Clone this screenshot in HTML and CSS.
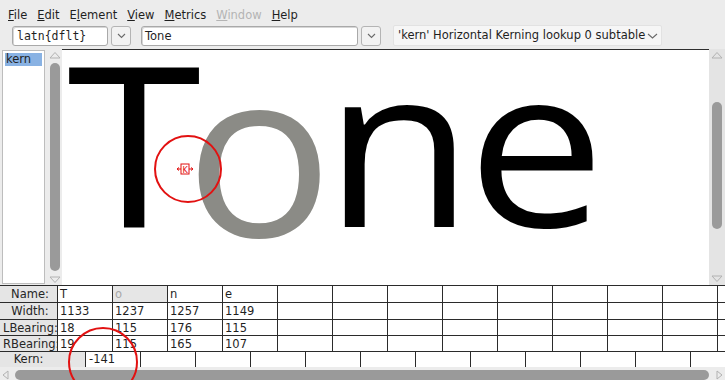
FILE: index.html
```html
<!DOCTYPE html>
<html>
<head>
<meta charset="utf-8">
<title>Metrics</title>
<link rel="stylesheet" href="styles.css">
</head>
<body>
<div class="window">
  <div class="menubar">
    <span class="menu"><u>F</u>ile</span>
    <span class="menu"><u>E</u>dit</span>
    <span class="menu">E<u>l</u>ement</span>
    <span class="menu"><u>V</u>iew</span>
    <span class="menu"><u>M</u>etrics</span>
    <span class="menu disabled"><u>W</u>indow</span>
    <span class="menu"><u>H</u>elp</span>
  </div>

  <div class="toolbar">
    <div class="field script">latn{dflt}</div>
    <div class="dropbtn"><svg width="9" height="6" viewBox="0 0 9 6"><path d="M1 1 L4.5 4.5 L8 1" fill="none" stroke="#6a6a6a" stroke-width="1.1"/></svg></div>
    <div class="field text">Tone</div>
    <div class="dropbtn"><svg width="9" height="6" viewBox="0 0 9 6"><path d="M1 1 L4.5 4.5 L8 1" fill="none" stroke="#6a6a6a" stroke-width="1.1"/></svg></div>
    <div class="combo"><span>'kern' Horizontal Kerning lookup 0 subtable</span><svg width="11" height="6" viewBox="0 0 11 6"><path d="M1 1 L5.5 5 L10 1" fill="none" stroke="#6a6a6a" stroke-width="1.1"/></svg></div>
  </div>

  <div class="main">
    <div class="featlist"><div class="feat selected">kern</div></div>
    <div class="vscroll vleft">
      <svg class="arrow" width="12" height="8" viewBox="0 0 12 8"><path d="M1 7 L6 1.5 L11 7 Z" fill="none" stroke="#b2b2b2" stroke-width="1"/></svg>
      <div class="thumb thumb-left"></div>
      <svg class="arrow" width="12" height="8" viewBox="0 0 12 8"><path d="M1 1 L6 6.5 L11 1 Z" fill="none" stroke="#b2b2b2" stroke-width="1"/></svg>
    </div>
    <div class="canvas">
      <svg class="glyphs" width="647" height="235" viewBox="0 0 647 235">
        <text transform="translate(5 177) scale(1.09 1)" class="g">T</text>
        <text transform="translate(123 187) scale(1.1 1.04)" class="g go">o</text>
        <text transform="translate(262 177) scale(1.09 1)" class="g">n</text>
        <text transform="translate(405 177) scale(1.1 1)" class="g">e</text>
      </svg>
    </div>
    <div class="vscroll vright">
      <svg class="arrow" width="12" height="8" viewBox="0 0 12 8"><path d="M1 7 L6 1.5 L11 7 Z" fill="none" stroke="#b2b2b2" stroke-width="1"/></svg>
      <div class="thumb thumb-right"></div>
      <div class="spacer"></div>
      <svg class="arrow" width="12" height="8" viewBox="0 0 12 8"><path d="M1 1 L6 6.5 L11 1 Z" fill="none" stroke="#b2b2b2" stroke-width="1"/></svg>
    </div>
  </div>

  <div class="table">
    <div class="lab">Name:</div><div class="c">T</div><div class="c cur">o</div><div class="c">n</div><div class="c">e</div><div class="c"></div><div class="c"></div><div class="c"></div><div class="c"></div><div class="c"></div><div class="c"></div><div class="c"></div><div class="c"></div><div class="c"></div>
    <div class="lab">Width:</div><div class="c">1133</div><div class="c">1237</div><div class="c">1257</div><div class="c">1149</div><div class="c"></div><div class="c"></div><div class="c"></div><div class="c"></div><div class="c"></div><div class="c"></div><div class="c"></div><div class="c"></div><div class="c"></div>
    <div class="lab">LBearing:</div><div class="c">18</div><div class="c">115</div><div class="c">176</div><div class="c">115</div><div class="c"></div><div class="c"></div><div class="c"></div><div class="c"></div><div class="c"></div><div class="c"></div><div class="c"></div><div class="c"></div><div class="c"></div>
    <div class="lab">RBearing:</div><div class="c">19</div><div class="c">115</div><div class="c">165</div><div class="c">107</div><div class="c"></div><div class="c"></div><div class="c"></div><div class="c"></div><div class="c"></div><div class="c"></div><div class="c"></div><div class="c"></div><div class="c"></div>
  </div>

  <div class="kernrow">
    <div class="klab">Kern:</div><div class="kpad"></div>
    <div class="k">-141</div><div class="k"></div><div class="k"></div><div class="k"></div><div class="k"></div><div class="k"></div><div class="k"></div><div class="k"></div><div class="k"></div><div class="k"></div><div class="k"></div><div class="k"></div>
  </div>

  <div class="hscroll">
    <svg class="harrow" width="7" height="10" viewBox="0 0 7 10"><path d="M6 1 L1 5 L6 9 Z" fill="none" stroke="#b2b2b2" stroke-width="1"/></svg>
    <div class="hthumb"></div>
    <svg class="harrow" width="7" height="10" viewBox="0 0 7 10"><path d="M1 1 L6 5 L1 9 Z" fill="none" stroke="#b2b2b2" stroke-width="1"/></svg>
  </div>

  <svg class="mark mark-one" width="72" height="72" viewBox="0 0 72 72">
    <circle cx="36" cy="36" r="33" fill="none" stroke="#e21111" stroke-width="2"/>
    <rect x="29" y="31" width="8" height="10" fill="none" stroke="#e21111" stroke-width="1"/>
    <text x="30.6" y="39.5" class="ktext">K</text>
    <path d="M25 36 H29 M27 34.5 L25 36 L27 37.5 M37 36 H41 M39 34.5 L41 36 L39 37.5" fill="none" stroke="#e21111" stroke-width="1"/>
  </svg>
  <svg class="mark mark-two" width="74" height="74" viewBox="0 0 74 74">
    <circle cx="37" cy="37" r="34" fill="none" stroke="#e21111" stroke-width="2"/>
  </svg>
</div>
</body>
</html>
```

FILE: styles.css
```css
html, body {
  margin: 0;
  padding: 0;
}

body {
  background: #ececec;
  font-family: "DejaVu Sans", sans-serif;
  font-size: 11.5px;
  color: #1f1f1f;
}

.window {
  position: relative;
  width: 725px;
  height: 380px;
  overflow: hidden;
  display: flex;
  flex-direction: column;
}

/* menu bar */
.menubar {
  height: 26px;
  box-sizing: border-box;
  padding: 8px 0 0 8px;
  display: flex;
  gap: 10px;
  line-height: 14px;
}

.menu u {
  text-decoration: underline;
  text-underline-offset: 1px;
}

.menu.disabled {
  color: #b4b4b4;
}

/* toolbar */
.toolbar {
  height: 25px;
  box-sizing: border-box;
  padding: 1px 0 0 12px;
  display: flex;
  align-items: flex-start;
}

.field {
  height: 20px;
  box-sizing: border-box;
  background: #fff;
  border: 1px solid #a9a9a9;
  border-radius: 3px;
  box-shadow: inset 1px 1px 0 #d6d6d6;
  line-height: 18px;
  padding-left: 4px;
  white-space: nowrap;
}

.field.script {
  width: 96px;
  margin-right: 3px;
  font-family: "DejaVu Sans Mono", monospace;
}

.field.text {
  width: 217px;
  margin-right: 3px;
  padding-left: 3px;
}

.dropbtn {
  width: 20px;
  height: 20px;
  box-sizing: border-box;
  border: 1px solid #b4b4b4;
  border-radius: 3px;
  background: #f2f2f2;
  display: flex;
  align-items: center;
  justify-content: center;
  margin-right: 12px;
}

.toolbar .dropbtn:nth-of-type(2) {
  margin-right: 10px;
}

.combo {
  width: 269px;
  height: 21px;
  margin-top: -1px;
  box-sizing: border-box;
  background: #f6f6f6;
  border: 1px solid #e2e2e2;
  border-radius: 2px;
  display: flex;
  align-items: center;
  padding-left: 4px;
  gap: 2px;
  white-space: nowrap;
  line-height: 19px;
}

/* main area */
.main {
  height: 236px;
  display: flex;
}

.featlist {
  width: 43px;
  box-sizing: border-box;
  margin: 1px 0 1px 2px;
  background: #fff;
  border: 1px solid #bdbdbd;
  padding: 2px;
}

.feat {
  line-height: 13px;
  height: 13px;
  padding-left: 1px;
}

.feat.selected {
  background: #89b2e3;
}

.vscroll {
  display: flex;
  flex-direction: column;
  align-items: center;
  box-sizing: border-box;
  padding: 2px 0;
}

.vleft {
  width: 15px;
  margin-left: 2px;
}

.vright {
  width: 16px;
  background: #e4e4e4;
}

.arrow {
  flex: none;
  display: block;
}

.thumb {
  width: 10px;
  background: #9a9a9a;
  border-radius: 5px;
  flex: none;
}

.thumb-left {
  height: 208px;
  margin: 4px 0 5px;
}

.thumb-right {
  height: 127px;
  margin-top: 43px;
}

.spacer {
  flex: 1;
}

.canvas {
  flex: 1;
  background: #fff;
  border-top: 1px solid #2e2e2e;
  overflow: hidden;
}

.glyphs {
  display: block;
}

.g {
  font-family: "Open Sans", sans-serif;
  font-size: 224px;
  fill: #000;
}

.go {
  fill: #8b8b86;
}

/* metrics table */
.table {
  display: grid;
  grid-template-columns: 57px repeat(12, 55px) 1fr;
  grid-template-rows: 17px 17px 16px 16px;
  border-bottom: 1px solid #2b2b2b;
  background: #fff;
  line-height: 16px;
}

.lab {
  background: #e5e5e5;
  border-top: 1px solid #2b2b2b;
  padding-left: 3px;
  text-align: center;
  white-space: nowrap;
  overflow: hidden;
  color: #262626;
}

.c {
  border-top: 1px solid #2b2b2b;
  border-left: 1px solid #2b2b2b;
  padding-left: 2px;
  white-space: nowrap;
  overflow: hidden;
}

.c.cur {
  background: #e6e6e6;
  color: #a8a8a8;
}

.kernrow {
  display: grid;
  grid-template-columns: 57px 28px repeat(11, 55px) 1fr;
  height: 15px;
  line-height: 15px;
}

.klab {
  text-align: center;
  background: #e5e5e5;
}

.kpad {
  background: #e5e5e5;
}

.k {
  background: #fff;
  border-left: 1px solid #2b2b2b;
  padding-left: 3px;
  white-space: nowrap;
}

/* horizontal scrollbar */
.hscroll {
  margin-top: 3px;
  height: 10px;
  display: flex;
  align-items: flex-start;
  padding: 0 2px;
  flex: none;
}

.harrow {
  flex: none;
  display: block;
}

.hthumb {
  flex: 1;
  height: 10px;
  margin: 0 7px 0 6px;
  background: #9a9a9a;
  border-radius: 5px;
}

/* red annotations */
.mark {
  position: absolute;
  overflow: visible;
}

.mark-one {
  left: 152px;
  top: 133px;
}

.mark-two {
  left: 66px;
  top: 325px;
}

.ktext {
  font-family: "DejaVu Sans", sans-serif;
  font-size: 8px;
  fill: #e21111;
}
```
